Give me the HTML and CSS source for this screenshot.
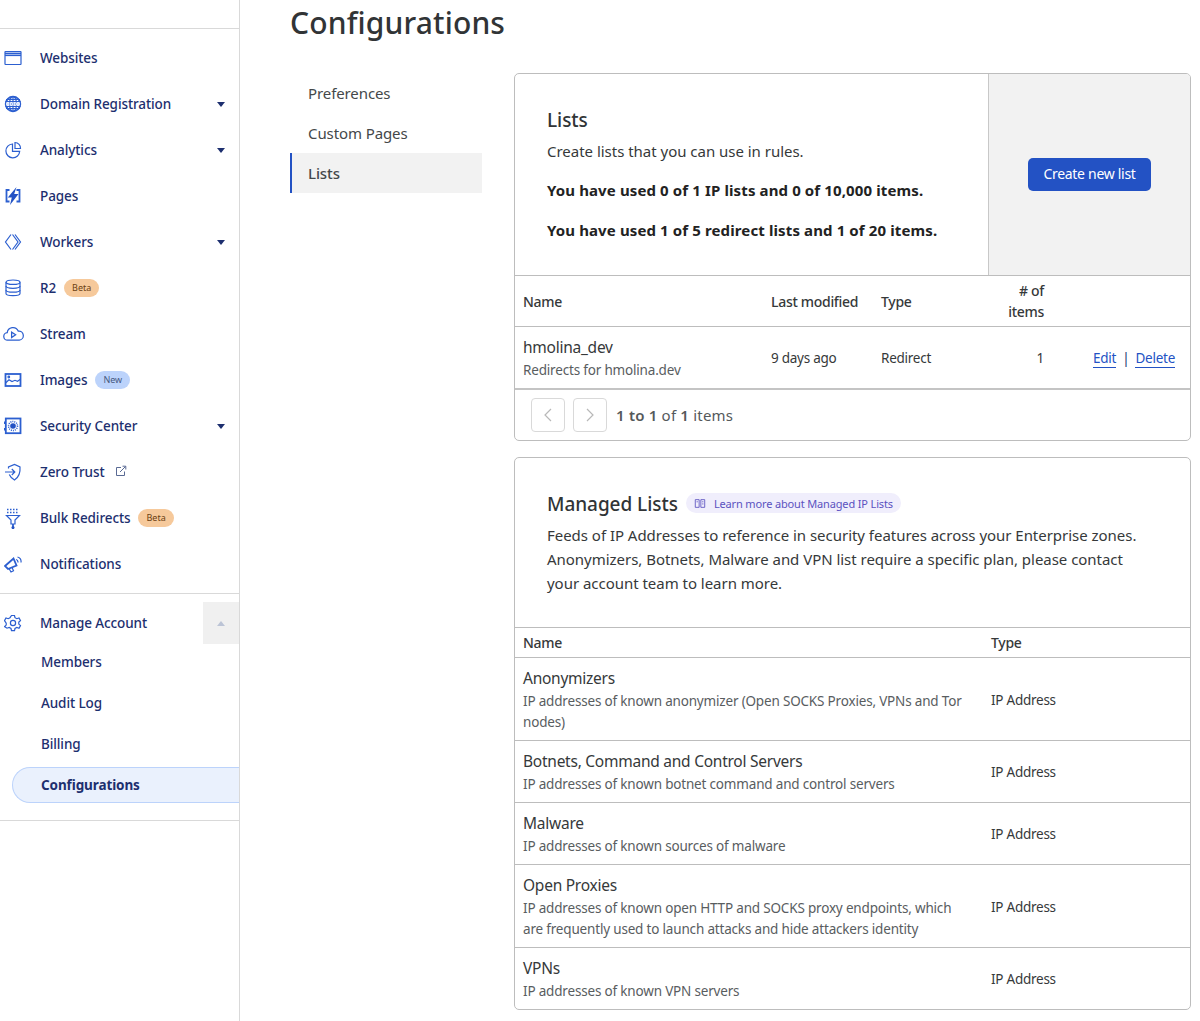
FILE: index.html
```html
<!DOCTYPE html>
<html lang="en">
<head>
    <meta charset="UTF-8">
    <meta name="viewport" content="width=device-width, initial-scale=1.0">
    <title>Configurations</title>
    <link rel="stylesheet" href="styles.css">
</head>
<body>
    <aside class="sidebar">
        <ul class="side-list">
            <li class="side-item">
                <svg class="side-icon" viewBox="0 0 18 18"><rect x="1" y="2.500" width="16" height="13" rx="0.5"/><path class="thick" d="M1 4.500h16"/><path d="M1 6.500h16"/></svg>
                <span>Websites</span>
            </li>
            <li class="side-item">
                <svg class="side-icon" viewBox="0 0 18 18"><circle class="thick" cx="9" cy="9" r="7.300"/><ellipse cx="9" cy="9" rx="3.500" ry="7.500"/><path d="M2 4.500h14M1.500 6.500h15M1.500 11.500h15M2 13.500h14M9 1.500v15"/><rect class="band" x="2" y="7.500" width="14" height="3"/><path class="thin" d="M5 9h8"/></svg>
                <span>Domain Registration</span>
                <i class="caret"></i>
            </li>
            <li class="side-item">
                <svg class="side-icon" viewBox="0 0 18 18"><path d="M8.500 3a6.900 6.900 0 1 0 7.200 7.300H8.500z"/><path d="M11 1.500a5.500 5.500 0 0 1 5.500 6H11z"/></svg>
                <span>Analytics</span>
                <i class="caret"></i>
            </li>
            <li class="side-item">
                <svg class="side-icon" viewBox="0 0 18 18"><path class="thick" d="M5.500 3H2.500v11.500h3M12.500 3h3v11.500h-3"/><path class="fill" d="M12.500 0 3.800 10.500h4L6 18 14.500 7h-4.300z"/></svg>
                <span>Pages</span>
            </li>
            <li class="side-item">
                <svg class="side-icon" viewBox="0 0 18 18"><path d="M7 1.500 1.500 9 7 16.500"/><path d="M8.500 1.500 14 9 8.500 16.500"/><path d="M11 1.500 16.500 9 11 16.500"/></svg>
                <span>Workers</span>
                <i class="caret"></i>
            </li>
            <li class="side-item">
                <svg class="side-icon" viewBox="0 0 18 18"><ellipse cx="9" cy="3.200" rx="7" ry="2.200"/><path d="M2 3.200v11.300c0 1.200 3.100 2.200 7 2.200s7-1 7-2.200V3.200"/><path d="M2 7.100c0 1.200 3.100 2.200 7 2.200s7-1 7-2.200M2 10.900c0 1.200 3.100 2.200 7 2.200s7-1 7-2.200"/></svg>
                <span>R2</span>
                <span class="tag tag-beta">Beta</span>
            </li>
            <li class="side-item">
                <svg class="side-icon wide" viewBox="0 0 20 14"><path d="M5 12.800H4.500a3.500 3.500 0 0 1-.5-7A5.500 5.500 0 0 1 14.500 4.200 4.300 4.300 0 0 1 15.500 12.800z"/><path d="M8.200 5.300v5l3.800-2.500z"/></svg>
                <span>Stream</span>
            </li>
            <li class="side-item">
                <svg class="side-icon" viewBox="0 0 18 18"><rect class="thick" x="1.500" y="3" width="15" height="12"/><path d="M1.500 12l3.500-3.300 3 1.800 3-1.200 2.500 1 3-2"/><circle cx="4.800" cy="6" r="0.800"/></svg>
                <span>Images</span>
                <span class="tag tag-new">New</span>
            </li>
            <li class="side-item">
                <svg class="side-icon" viewBox="0 0 18 18"><rect class="thick" x="1.800" y="1.500" width="14.700" height="14.700"/><circle cx="9" cy="9" r="4.500" class="dashed"/><circle class="fill" cx="9" cy="9" r="2.800"/><path class="thick" d="M0.700 4.500v2.500M0.700 11v2.500"/></svg>
                <span>Security Center</span>
                <i class="caret"></i>
            </li>
            <li class="side-item">
                <svg class="side-icon" viewBox="0 0 18 18"><path d="M4.500 5.500v-1.500L10.500 1.500 16 4c.5 6-1.300 10.300-5.500 13-2.500-1.500-4.300-3.200-5.200-5.500"/><path d="M1 9h9.500M7.800 6 10.800 9 7.800 12"/></svg>
                <span>Zero Trust</span>
                <svg class="ext-icon" viewBox="0 0 12 12"><path d="M6 2.500H1.500v8h8V6.500"/><path d="M5 7 10.500 1.500M7.500 1.200h3.300v3.300"/></svg>
            </li>
            <li class="side-item">
                <svg class="side-icon tall" viewBox="0 0 18 22"><path class="dotted" d="M3 1.500h12M3 4.500h12"/><path d="M2.500 7.500h13L11 12v4H7v-4z"/><path class="thick" d="M9 16v5"/><circle class="fill" cx="9" cy="19.500" r="1.500"/></svg>
                <span>Bulk Redirects</span>
                <span class="tag tag-beta">Beta</span>
            </li>
            <li class="side-item">
                <svg class="side-icon" viewBox="0 0 18 18"><path class="thick" d="M1 11 9.500 3.500l3 7-8.500 3.500z"/><path d="M5 13.500 7 17l2.500-1.200L8 12.500"/><path d="M12 4.500a2.500 2.500 0 0 1 1.800 3M13.500 2A5 5 0 0 1 17 7.500"/></svg>
                <span>Notifications</span>
            </li>
        </ul>

        <div class="account">
            <div class="side-item account-head">
                <svg class="side-icon" viewBox="0 0 18 18"><circle cx="9" cy="9" r="2.600"/><path d="M7.500 1.500h3l.5 2.200 1.800 1 2.200-.7 1.500 2.600-1.700 1.500v2l1.700 1.500-1.500 2.600-2.200-.7-1.800 1-.5 2.200h-3l-.5-2.200-1.800-1-2.200.7L.5 12.600l1.700-1.500v-2L.5 6.600 2 4l2.200.7 1.800-1z"/></svg>
                <span>Manage Account</span>
                <div class="collapse-btn"><i class="caret-up"></i></div>
            </div>
            <a class="sub-item">Members</a>
            <a class="sub-item">Audit Log</a>
            <a class="sub-item">Billing</a>
            <a class="sub-item active">Configurations</a>
        </div>
    </aside>

    <main class="content">
        <h1 class="page-title">Configurations</h1>
        <div class="columns">
            <nav class="tabs">
                <a class="tab">Preferences</a>
                <a class="tab">Custom Pages</a>
                <a class="tab current">Lists</a>
            </nav>

            <div class="cards">
                <section class="card">
                    <div class="card-top">
                        <div class="card-intro">
                            <h3>Lists</h3>
                            <p class="lead">Create lists that you can use in rules.</p>
                            <p class="usage">You have used 0 of 1 IP lists and 0 of 10,000 items.</p>
                            <p class="usage">You have used 1 of 5 redirect lists and 1 of 20 items.</p>
                        </div>
                        <div class="card-action">
                            <button class="btn-primary">Create new list</button>
                        </div>
                    </div>
                    <table class="data lists-table">
                        <thead>
                            <tr>
                                <th class="col-name">Name</th>
                                <th class="col-mod">Last modified</th>
                                <th class="col-type">Type</th>
                                <th class="col-count">#&nbsp;of<br>items</th>
                                <th></th>
                            </tr>
                        </thead>
                        <tbody>
                            <tr>
                                <td><div class="row-title">hmolina_dev</div><div class="row-sub">Redirects for hmolina.dev</div></td>
                                <td>9 days ago</td>
                                <td>Redirect</td>
                                <td class="col-count">1</td>
                                <td class="col-actions"><a class="link">Edit</a><span class="sep">|</span><a class="link">Delete</a></td>
                            </tr>
                        </tbody>
                    </table>
                    <div class="pager">
                        <span class="page-btn"><svg viewBox="0 0 10 16"><path d="M8 2 2 8l6 6"/></svg></span>
                        <span class="page-btn"><svg viewBox="0 0 10 16"><path d="M2 2l6 6-6 6"/></svg></span>
                        <span class="page-text"><b>1 to 1</b> of <b>1</b> items</span>
                    </div>
                </section>

                <section class="card">
                    <div class="managed-intro">
                        <div class="managed-head">
                            <h3>Managed Lists</h3>
                            <a class="learn-pill">
                                <svg viewBox="0 0 14 12"><path d="M1.500 1.500h4.500v9H1.500zM8 1.500h4.500v9H8z"/><path d="M3 4h1.500M9.500 4H11M9.500 6.500H11"/></svg>
                                Learn more about Managed IP Lists
                            </a>
                        </div>
                        <p>Feeds of IP Addresses to reference in security features across your Enterprise zones. Anonymizers, Botnets, Malware and VPN list require a specific plan, please contact your account team to learn more.</p>
                    </div>
                    <table class="data managed-table">
                        <thead>
                            <tr><th class="col-mname">Name</th><th>Type</th></tr>
                        </thead>
                        <tbody>
                            <tr>
                                <td><div class="row-title">Anonymizers</div><div class="row-sub">IP addresses of known anonymizer (Open SOCKS Proxies, VPNs and Tor nodes)</div></td>
                                <td>IP Address</td>
                            </tr>
                            <tr>
                                <td><div class="row-title">Botnets, Command and Control Servers</div><div class="row-sub">IP addresses of known botnet command and control servers</div></td>
                                <td>IP Address</td>
                            </tr>
                            <tr>
                                <td><div class="row-title">Malware</div><div class="row-sub">IP addresses of known sources of malware</div></td>
                                <td>IP Address</td>
                            </tr>
                            <tr>
                                <td><div class="row-title">Open Proxies</div><div class="row-sub">IP addresses of known open HTTP and SOCKS proxy endpoints, which are frequently used to launch attacks and hide attackers identity</div></td>
                                <td>IP Address</td>
                            </tr>
                            <tr>
                                <td><div class="row-title">VPNs</div><div class="row-sub">IP addresses of known VPN servers</div></td>
                                <td>IP Address</td>
                            </tr>
                        </tbody>
                    </table>
                </section>
            </div>
        </div>
    </main>
</body>
</html>
```

FILE: styles.css
```css
html, body {
    height: 100%;
}
body {
    font-family: "Noto Sans", "Open Sans", sans-serif;
    font-size: 14px;
    letter-spacing: -0.25px;
    color: #36393a;
    margin: 0;
    background-color: white;
    display: flex;
    height: 1021px;
    overflow: hidden;
}

/* left sidebar */
.sidebar {
    width: 239px;
    flex-shrink: 0;
    border-right: 1px solid #d9d9d9;
    padding-top: 28px;
    color: #1d2f6f;
    font-weight: 500;
    font-size: 13.5px;
    letter-spacing: -0.1px;
}
.side-list {
    list-style: none;
    margin: 0;
    padding: 6px 0;
    border-top: 1px solid #d9d9d9;
    border-bottom: 1px solid #d9d9d9;
}
.side-item {
    height: 46px;
    display: flex;
    align-items: center;
    padding-left: 4px;
    position: relative;
}
.side-icon {
    width: 18px;
    height: 18px;
    margin-right: 18px;
    flex-shrink: 0;
    fill: none;
    stroke: #2c5fd0;
    stroke-width: 1.2;
}
.side-icon.wide {
    width: 21px;
    margin-left: -1px;
    margin-right: 16px;
}
.side-icon.tall {
    height: 22px;
    margin-top: 2px;
}
.side-icon .fill {
    fill: #2352c4;
    stroke: none;
}
.side-icon .thick {
    stroke-width: 1.8;
}
.side-icon .thin {
    stroke-width: 0.8;
    stroke-dasharray: 1 1;
}
.side-icon .band {
    fill: #dbe6fb;
    stroke: none;
}
.side-icon .dotted {
    stroke-width: 1.5;
    stroke-dasharray: 1.5 1.500;
}
.side-icon .dashed {
    stroke-width: 1.5;
    stroke-dasharray: 1 1;
}
.caret {
    position: absolute;
    right: 14px;
    top: 21px;
    border-left: 4.5px solid transparent;
    border-right: 4.5px solid transparent;
    border-top: 5px solid #1d2f6f;
}
.ext-icon {
    width: 12px;
    height: 12px;
    margin-left: 10px;
    margin-top: -2px;
    fill: none;
    stroke: #5a6a94;
    stroke-width: 1;
}
.tag {
    font-size: 9px;
    font-weight: 400;
    letter-spacing: 0;
    height: 18px;
    line-height: 18px;
    padding: 0 8px;
    border-radius: 9px;
    margin-left: 8px;
}
.tag-beta {
    background-color: #f6c99b;
    color: #6b3f12;
}
.tag-new {
    background-color: #bcd3fb;
    color: #45597f;
}

.account {
    padding-top: 6px;
    padding-bottom: 17px;
    border-bottom: 1px solid #d9d9d9;
}
.account-head {
    height: 42px;
    margin-top: 2px;
}
.collapse-btn {
    position: absolute;
    right: 0;
    top: 0;
    width: 36px;
    height: 42px;
    background-color: #f0f0f0;
    display: flex;
    align-items: center;
    justify-content: center;
}
.caret-up {
    border-left: 4.5px solid transparent;
    border-right: 4.5px solid transparent;
    border-bottom: 5px solid #bcc4d6;
}
.sub-item {
    display: block;
    height: 41px;
    line-height: 36px;
    padding-left: 41px;
    box-sizing: border-box;
}
.sub-item.active {
    height: 36px;
    line-height: 34px;
    margin-left: 12px;
    padding-left: 28px;
    font-weight: 700;
    background-color: #eaf1fd;
    border: 1px solid #bcd3fb;
    border-right: none;
    border-radius: 18px 0 0 18px;
}

/* main column */
.content {
    flex: 1;
    padding-left: 50px;
    padding-right: 9px;
    min-width: 0;
}
.page-title {
    font-size: 30px;
    font-weight: 500;
    letter-spacing: 0.15px;
    line-height: 40px;
    margin: 3px 0 30px;
    color: #313436;
}
.columns {
    display: flex;
    gap: 32px;
}
.tabs {
    width: 192px;
    flex-shrink: 0;
}
.tab {
    display: block;
    height: 40px;
    line-height: 40px;
    padding-left: 18px;
    font-size: 15px;
    letter-spacing: -0.1px;
    color: #44484a;
    box-sizing: border-box;
}
.tab.current {
    background-color: #f2f2f2;
    border-left: 2px solid #2352c4;
    padding-left: 16px;
    font-weight: 500;
}
.cards {
    flex: 1;
    min-width: 0;
    display: flex;
    flex-direction: column;
    gap: 16px;
}
.card {
    border: 1px solid #bdbdbd;
    border-radius: 5px;
    overflow: hidden;
}
.card-top {
    display: flex;
    height: 201px;
    border-bottom: 1px solid #bdbdbd;
}
.card-intro {
    flex: 1;
    padding: 32px 32px 0;
}
h3 {
    font-size: 19px;
    font-weight: 500;
    letter-spacing: -0.05px;
    line-height: 28px;
    margin: 0;
    color: #313436;
}
.card-intro p {
    margin: 0;
    font-size: 15px;
    letter-spacing: -0.02px;
    line-height: 24px;
}
.card-intro .lead {
    margin-top: 5px;
}
.card-intro .usage {
    font-weight: 700;
    letter-spacing: 0.12px;
    color: #222;
    margin-top: 16px;
}
.card-intro .lead + .usage {
    margin-top: 15px;
}
.card-action {
    width: 201px;
    background-color: #f2f2f2;
    border-left: 1px solid #c8c8c8;
    display: flex;
    align-items: center;
    justify-content: center;
}
.btn-primary {
    font-family: inherit;
    font-size: 14px;
    letter-spacing: -0.3px;
    color: white;
    background-color: #2352c4;
    border: none;
    border-radius: 5px;
    width: 123px;
    height: 33px;
    padding: 0 0 2px;
}

/* tables */
.data {
    width: 100%;
    border-collapse: collapse;
    table-layout: fixed;
}
.data th {
    text-align: left;
    font-weight: 500;
    font-size: 14px;
    letter-spacing: -0.3px;
    line-height: 21px;
    padding: 4px 8px;
    color: #36393a;
}
.data td {
    padding: 9px 8px 7px;
    border-top: 1px solid #bdbdbd;
    line-height: 21px;
    font-size: 13.5px;
}
.data td:first-child {
    padding: 8px 12px 7px 8px;
}
.row-title {
    font-size: 15.5px;
    line-height: 25px;
    color: #36393a;
}
.row-sub {
    font-size: 13.5px;
    letter-spacing: -0.18px;
    color: #595d5f;
}
.col-name {
    width: 232px;
}
.col-mod {
    width: 94px;
}
.col-type {
    width: 74px;
}
.col-count {
    text-align: right !important;
    width: 73px;
}
.col-actions {
    text-align: right;
    padding-right: 15px !important;
    white-space: nowrap;
}
.link {
    color: #2352c4;
    border-bottom: 1px solid #2352c4;
}
.sep {
    margin: 0 6px;
    color: #1d2f6f;
}
.lists-table thead th {
    height: 42px;
}
.lists-table tbody td {
    border-bottom: 2px solid #c4c4c4;
}
.pager {
    height: 50px;
    padding-left: 16px;
    display: flex;
    align-items: center;
    gap: 8px;
}
.page-btn {
    width: 34px;
    height: 34px;
    box-sizing: border-box;
    border: 1px solid #d9d9d9;
    border-radius: 4px;
    display: flex;
    align-items: center;
    justify-content: center;
}
.page-btn svg {
    width: 10px;
    height: 16px;
    fill: none;
    stroke: #b8b8b8;
    stroke-width: 1.2;
}
.page-text {
    margin-left: 1px;
    margin-top: -1px;
    font-size: 15px;
    letter-spacing: 0.2px;
    color: #55595b;
}
.page-text b {
    font-weight: 600;
}

.managed-intro {
    height: 170px;
    box-sizing: border-box;
    padding: 31px 32px 0;
    border-bottom: 1px solid #bdbdbd;
}
.managed-head {
    display: flex;
    align-items: center;
    gap: 8px;
    height: 28px;
}
.managed-head h3 {
    padding-top: 1px;
}
.managed-intro p {
    margin: 6px 0 0;
    font-size: 15px;
    letter-spacing: -0.03px;
    line-height: 24px;
}
.learn-pill {
    display: flex;
    align-items: center;
    gap: 8px;
    height: 20px;
    padding: 0 8px;
    border-radius: 10px;
    font-size: 11px;
    letter-spacing: -0.15px;
    color: #5b52c0;
    background-color: #f0eefc;
}
.learn-pill svg {
    width: 12px;
    height: 11px;
    fill: none;
    stroke: #5b52c0;
    stroke-width: 1;
}
.managed-table th {
    height: 21px;
}
.col-mname {
    width: 452px;
}
```
